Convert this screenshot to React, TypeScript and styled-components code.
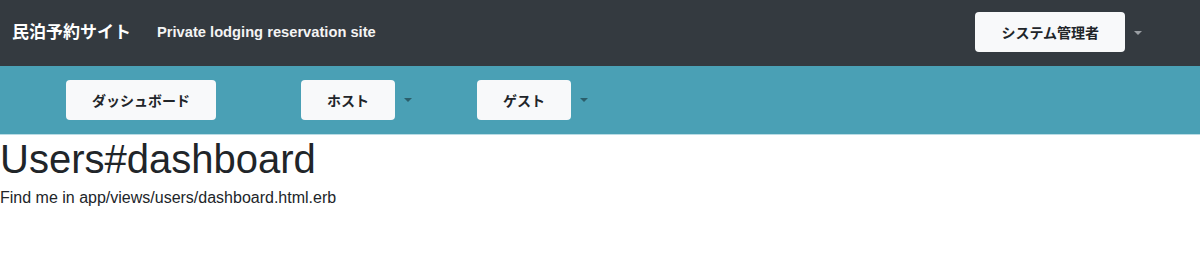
import React from "react";
import styled, { createGlobalStyle } from "styled-components";

const Global = createGlobalStyle`
  html, body { margin: 0; padding: 0; background: #fff; }
  body {
    font-family: "Liberation Sans", "Noto Sans CJK JP", sans-serif;
    color: #212529;
  }
  * { box-sizing: border-box; }
`;

const jp = `"Liberation Sans", "Noto Sans CJK JP", sans-serif`;

const TopBar = styled.header`
  height: 66px;
  background: #343a40;
  display: flex;
  align-items: center;
  padding: 0 0 0 12px;
`;

const Brand = styled.div`
  font-family: ${jp};
  font-size: 17px;
  font-weight: 700;
  color: #fff;
  margin-right: 26px;
  margin-top: -6px;
`;

const Tagline = styled.div`
  font-family: ${jp};
  font-size: 14.7px;
  font-weight: 700;
  color: #f4f4f4;
  margin-top: -2px;
`;

const Spacer = styled.div`
  flex: 1;
`;

const Btn = styled.button<{ $lift?: number }>`
  font-family: ${jp};
  font-size: 14px;
  font-weight: 700;
  color: #212529;
  background: #f8f9fa;
  border: none;
  border-radius: 4px;
  height: 40px;
  padding: 0 26px;
  margin-top: ${(p) => -(p.$lift ?? 0)}px;
  display: flex;
  align-items: center;
  justify-content: center;
  cursor: pointer;
`;

const Caret = styled.span<{ $color: string }>`
  width: 0;
  height: 0;
  border-left: 4px solid transparent;
  border-right: 4px solid transparent;
  border-top: 4px solid ${(p) => p.$color};
  margin-left: 9px;
`;

const Group = styled.div<{ $mr?: number }>`
  display: flex;
  align-items: center;
  margin-right: ${(p) => p.$mr ?? 0}px;
`;

const NavBar = styled.nav`
  height: 69px;
  background: #4aa0b5;
  border-bottom: 1px solid #b9dce5;
  display: flex;
  align-items: center;
  padding-left: 66px;
`;

const Main = styled.main`
  padding: 0;
`;

const Title = styled.h1`
  font-family: "Liberation Sans", sans-serif;
  font-size: 40px;
  font-weight: 400;
  line-height: 1.2;
  margin: 0 0 3px;
  color: #212529;
`;

const Text = styled.p`
  font-family: "Liberation Sans", sans-serif;
  font-size: 16px;
  line-height: 1.5;
  margin: 0;
  color: #212529;
`;

export default function App() {
  return (
    <>
      <Global />
      <TopBar>
        <Brand>民泊予約サイト</Brand>
        <Tagline>Private lodging reservation site</Tagline>
        <Spacer />
        <Group $mr={58}>
          <Btn $lift={2}>システム管理者</Btn>
          <Caret $color="#9a9ea3" />
        </Group>
      </TopBar>
      <NavBar>
        <Group $mr={85}>
          <Btn>ダッシュボード</Btn>
        </Group>
        <Group $mr={65}>
          <Btn>ホスト</Btn>
          <Caret $color="#2b5e6b" />
        </Group>
        <Group>
          <Btn>ゲスト</Btn>
          <Caret $color="#2b5e6b" />
        </Group>
      </NavBar>
      <Main>
        <Title>Users#dashboard</Title>
        <Text>Find me in app/views/users/dashboard.html.erb</Text>
      </Main>
    </>
  );
}
